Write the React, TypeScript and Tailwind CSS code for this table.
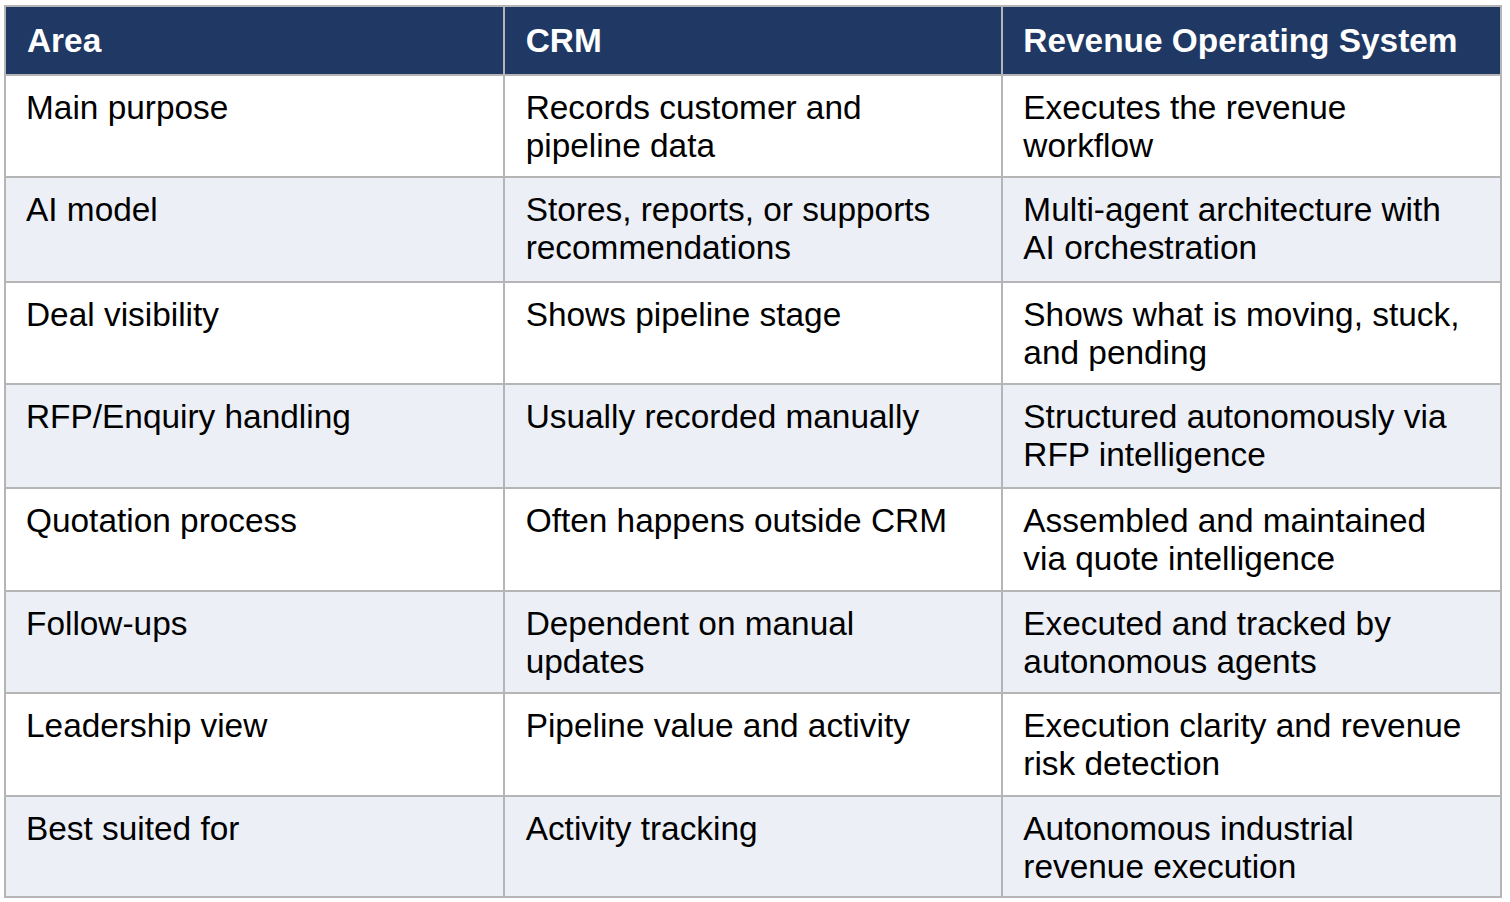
import React from "react";

const rows: { area: string; crm: string[]; ros: string[] }[] = [
  { area: "Main purpose", crm: ["Records customer and", "pipeline data"], ros: ["Executes the revenue", "workflow"] },
  { area: "AI model", crm: ["Stores, reports, or supports", "recommendations"], ros: ["Multi-agent architecture with", "AI orchestration"] },
  { area: "Deal visibility", crm: ["Shows pipeline stage"], ros: ["Shows what is moving, stuck,", "and pending"] },
  { area: "RFP/Enquiry handling", crm: ["Usually recorded manually"], ros: ["Structured autonomously via", "RFP intelligence"] },
  { area: "Quotation process", crm: ["Often happens outside CRM"], ros: ["Assembled and maintained", "via quote intelligence"] },
  { area: "Follow-ups", crm: ["Dependent on manual", "updates"], ros: ["Executed and tracked by", "autonomous agents"] },
  { area: "Leadership view", crm: ["Pipeline value and activity"], ros: ["Execution clarity and revenue", "risk detection"] },
  { area: "Best suited for", crm: ["Activity tracking"], ros: ["Autonomous industrial", "revenue execution"] },
];

function Lines({ lines }: { lines: string[] }) {
  return (
    <>
      {lines.map((l) => (
        <span key={l} className="block whitespace-nowrap">
          {l}
        </span>
      ))}
    </>
  );
}

export default function App() {
  return (
    <div className="min-h-screen bg-white font-['Liberation_Sans',Arial,sans-serif] text-[33.4px] leading-[38px] text-black">
      <div className="ml-[4px] pt-[5px]">
        <div className="grid w-[1498px] grid-cols-3 grid-rows-[67px_100px_103px_100px_102px_101px_100px_101px_99px] gap-[2px] bg-[#b5b5b5] p-[2px]">
          {/* header */}
          <div className="bg-[#1f3864] pl-[21px] pt-[15px] font-bold text-white">Area</div>
          <div className="bg-[#1f3864] pl-[21px] pt-[15px] font-bold text-white">CRM</div>
          <div className="bg-[#1f3864] pl-[20px] pt-[15px] font-bold text-white">Revenue Operating System</div>

          {rows.map((r, i) => {
            const bg = i % 2 === 1 ? "bg-[#eceff6]" : "bg-white";
            return (
              <React.Fragment key={r.area}>
                <div className={`${bg} pl-[20px] pt-[13px] whitespace-nowrap`}>{r.area}</div>
                <div className={`${bg} pl-[21px] pt-[13px]`}>
                  <Lines lines={r.crm} />
                </div>
                <div className={`${bg} pl-[20px] pt-[13px]`}>
                  <Lines lines={r.ros} />
                </div>
              </React.Fragment>
            );
          })}
        </div>
      </div>
    </div>
  );
}
